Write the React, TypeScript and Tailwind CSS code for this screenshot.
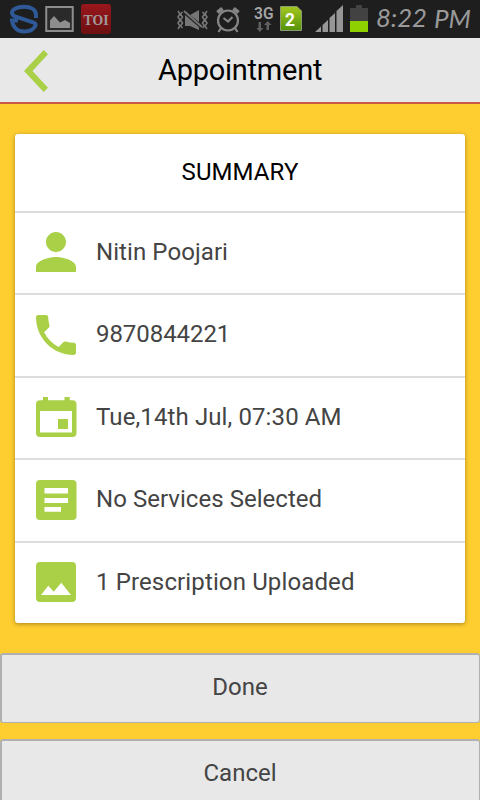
import type { ReactNode } from 'react'

const StatusBar = () => {
	return (
		<div className="h-[38px] w-full shrink-0 bg-[#1e1e1e]">
			<svg width="480" height="38" viewBox="0 0 480 38">
				<defs>
					<linearGradient id="toi" x1="0" y1="0" x2="0" y2="1">
						<stop offset="0" stopColor="#99171b" />
						<stop offset="1" stopColor="#6c1012" />
					</linearGradient>
					<linearGradient id="sim" x1="0" y1="0" x2="0" y2="1">
						<stop offset="0" stopColor="#a4c720" />
						<stop offset="1" stopColor="#559309" />
					</linearGradient>
				</defs>
				{/* sync */}
				<path
					d="M36 18V15C36 9.500 31 6.800 24 6.800C17 6.800 12 9.500 12 13C12 15 13.500 15.700 15 16.300L33 22.300C35 23 36 24 35.500 25.500C34 29 30 31.500 24 31.500C18 31.500 13 28 12 20.500H18"
					fill="none"
					stroke="#2f5896"
					strokeWidth="4"
				/>
				{/* gallery */}
				<rect x="46.250" y="7" width="26.500" height="24" fill="#2a2a2a" stroke="#8d8d8d" strokeWidth="2" />
				<path d="M50 28V20.500L54 16L60 22.500L65 20L70 23V28Z" fill="#8d8d8d" />
				{/* news */}
				<rect x="81" y="4" width="30" height="30" rx="3" fill="url(#toi)" />
				<text x="83.500" y="24.500" textLength="25" lengthAdjust="spacingAndGlyphs" fontSize="15" fontWeight="700" fill="#a09a9a" className="font-['Liberation_Serif',serif]">
					TOI
				</text>
				{/* vibrate off */}
				<g fill="none" stroke="#767676" strokeWidth="1.600">
					<path d="M178 11l2 3-2 3 2 3-2 3 2 3-2 3M182.500 12l-2 2 2 3-2 3 2 3-2 3 2 2M207 11l-2 3 2 3-2 3 2 3-2 3 2 3M202.500 12l2 2-2 3 2 3-2 3 2 3-2 2" />
				</g>
				<path d="M185 15V26H190L199 30V27L185 15ZM190 15L199 10V22Z" fill="#767676" />
				<path d="M184 11L202 27" stroke="#767676" strokeWidth="2" />
				{/* alarm */}
				<g fill="none" stroke="#858585" strokeWidth="2.200">
					<circle cx="228" cy="20.500" r="10" />
					<path d="M223.500 18L228 21.500L232.500 17M221 28L218.500 32M235 28L237.500 32" />
					<path d="M217.500 12.500L222.500 8.500M238.500 12.500L233.500 8.500" strokeWidth="4" />
				</g>
				{/* network */}
				<text x="254" y="18.500" textLength="19.500" lengthAdjust="spacingAndGlyphs" fontSize="16.500" fontWeight="600" fill="#a6a6a6" className="font-[Roboto,sans-serif]">
					3G
				</text>
				<path d="M258.500 22H261V28H263.500L259.750 32L256.500 28H258.500ZM266.500 30V25H264L267.750 21L271.500 25H269V30Z" fill="#606060" />
				<path d="M280.500 6.500H297L301.500 11V30.500H280.500Z" fill="url(#sim)" stroke="#8b9b70" />
				<text x="285" y="25.500" textLength="10" lengthAdjust="spacingAndGlyphs" fontSize="19" fontWeight="700" fill="#ffffff" className="font-[Roboto,sans-serif]">
					2
				</text>
				{/* signal */}
				<path d="M315 32L321 26.500V32ZM322.500 25L328 20V32H322.500ZM329.500 18L335 13V32H329.500ZM336.500 11L343 5V32H336.500Z" fill="#969696" />
				{/* battery */}
				<path d="M350 8H356V5H362V8H368V21H350Z" fill="#424242" />
				<rect x="350" y="21" width="18" height="11" fill="#8fd000" />
				<g fontSize="26" fontStyle="italic" fontWeight="400" fill="#9a9a9a" className="font-[Lato,sans-serif]">
					<text x="376" y="27" textLength="51" lengthAdjust="spacingAndGlyphs">
						8:22
					</text>
					<text x="434" y="28" textLength="37" lengthAdjust="spacingAndGlyphs">
						PM
					</text>
				</g>
			</svg>
		</div>
	)
}

const Icon = ({ viewBox = '0 0 40 40', children }: { viewBox?: string; children: ReactNode }) => {
	return (
		<svg viewBox={viewBox} className="size-10 shrink-0 overflow-visible fill-[#a9d046]">
			{children}
		</svg>
	)
}

const rows = [
	{
		label: 'Nitin Poojari',
		className: 'h-[82px] tracking-[0.08px]',
		icon: (
			<Icon viewBox="4 4 16 16">
				<path d="M12 12c2.210 0 4-1.790 4-4s-1.790-4-4-4-4 1.790-4 4 1.790 4 4 4zm0 2c-2.670 0-8 1.340-8 4v2h16v-2c0-2.660-5.330-4-8-4z" />
			</Icon>
		),
	},
	{
		label: '9870844221',
		className: 'h-[83px] tracking-[-0.06px] [&>svg]:mt-0.5',
		icon: (
			<Icon viewBox="3 3 18 18">
				<path d="M6.620 10.790c1.440 2.830 3.760 5.140 6.590 6.590l2.200-2.200c.27-.27.67-.36 1.020-.24 1.120.37 2.330.57 3.570.57.55 0 1 .45 1 1V20c0 .55-.45 1-1 1-9.390 0-17-7.610-17-17 0-.55.45-1 1-1h3.500c.55 0 1 .45 1 1 0 1.250.2 2.450.57 3.570.11.35.03.74-.25 1.020l-2.200 2.200z" />
			</Icon>
		),
	},
	{
		label: 'Tue,14th Jul, 07:30 AM',
		className: 'h-[82px] tracking-[0.11px]',
		icon: (
			<Icon>
				<path
					fillRule="evenodd"
					d="M7 0H12V3.300H28.500V0H33.800V3.300H36.500A4 4 0 0 1 40.500 7.300V36A4 4 0 0 1 36.500 40H4A4 4 0 0 1 0 36V7.300A4 4 0 0 1 4 3.300H7ZM4 14V35.500H36V14ZM22 22H32V32H22Z"
				/>
			</Icon>
		),
	},
	{
		label: 'No Services Selected',
		className: 'h-[83px] tracking-[0.04px] [&>svg]:mt-0.5',
		icon: (
			<Icon>
				<rect width="40.500" height="40" rx="4" />
				<path d="M8.500 8H32V13.500H8.500ZM8.500 18H32V23H8.500ZM8.500 27H25V31.700H8.500Z" className="fill-white" />
			</Icon>
		),
	},
	{
		label: '1 Prescription Uploaded',
		className: 'h-[82px] tracking-[0.13px]',
		icon: (
			<Icon>
				<rect width="40" height="40" rx="4" />
				<path d="M5 33L12.300 23.700L17.700 29.700L25.300 20.700L35 33Z" className="fill-white" />
			</Icon>
		),
	},
]

const App = () => {
	return (
		<div className="flex h-[800px] w-[480px] flex-col overflow-hidden bg-[#fecd30] font-[Roboto,sans-serif] text-[#444444]">
			<StatusBar />
			<header className="flex h-[66px] shrink-0 items-center border-b-2 border-[#c85a45] bg-[#e8e8e8] pl-6">
				<svg width="24" height="42" viewBox="0 0 24 42" className="mt-0.5 fill-[#a9d046]">
					<path d="M0 21L19.700 0L24 4.200L8.500 21L24 37.800L19.700 42Z" />
				</svg>
				<h1 className="ml-[110px] text-[29px] leading-8 tracking-[-0.25px] text-black">Appointment</h1>
			</header>
			<main className="mx-[15px] mt-[30px] shrink-0 rounded-[3px] bg-white shadow-[0_1px_4px_rgba(0,0,0,0.35)]">
				<h2 className="flex h-[77px] items-center justify-center pb-0.5 text-2xl tracking-[0.1px] text-black">SUMMARY</h2>
				{rows.map((row) => (
					<div
						key={row.label}
						className={`flex items-center gap-5 border-t-2 border-[#dddddd] pb-[3px] pl-[21px] text-2xl ${row.className}`}
					>
						{row.icon}
						<span>{row.label}</span>
					</div>
				))}
			</main>
			<div className="mt-[30px] flex shrink-0 flex-col gap-4">
				<button type="button" className="h-[70px] rounded-[3px] border-2 border-r border-b border-[#b0b0b0] bg-[#e8e8e8] pr-px pb-[3px] text-2xl">
					Done
				</button>
				<button type="button" className="h-[70px] rounded-[3px] border-2 border-r border-b border-[#b0b0b0] bg-[#e8e8e8] pr-px pb-[3px] text-2xl">
					Cancel
				</button>
			</div>
		</div>
	)
}

export default App
